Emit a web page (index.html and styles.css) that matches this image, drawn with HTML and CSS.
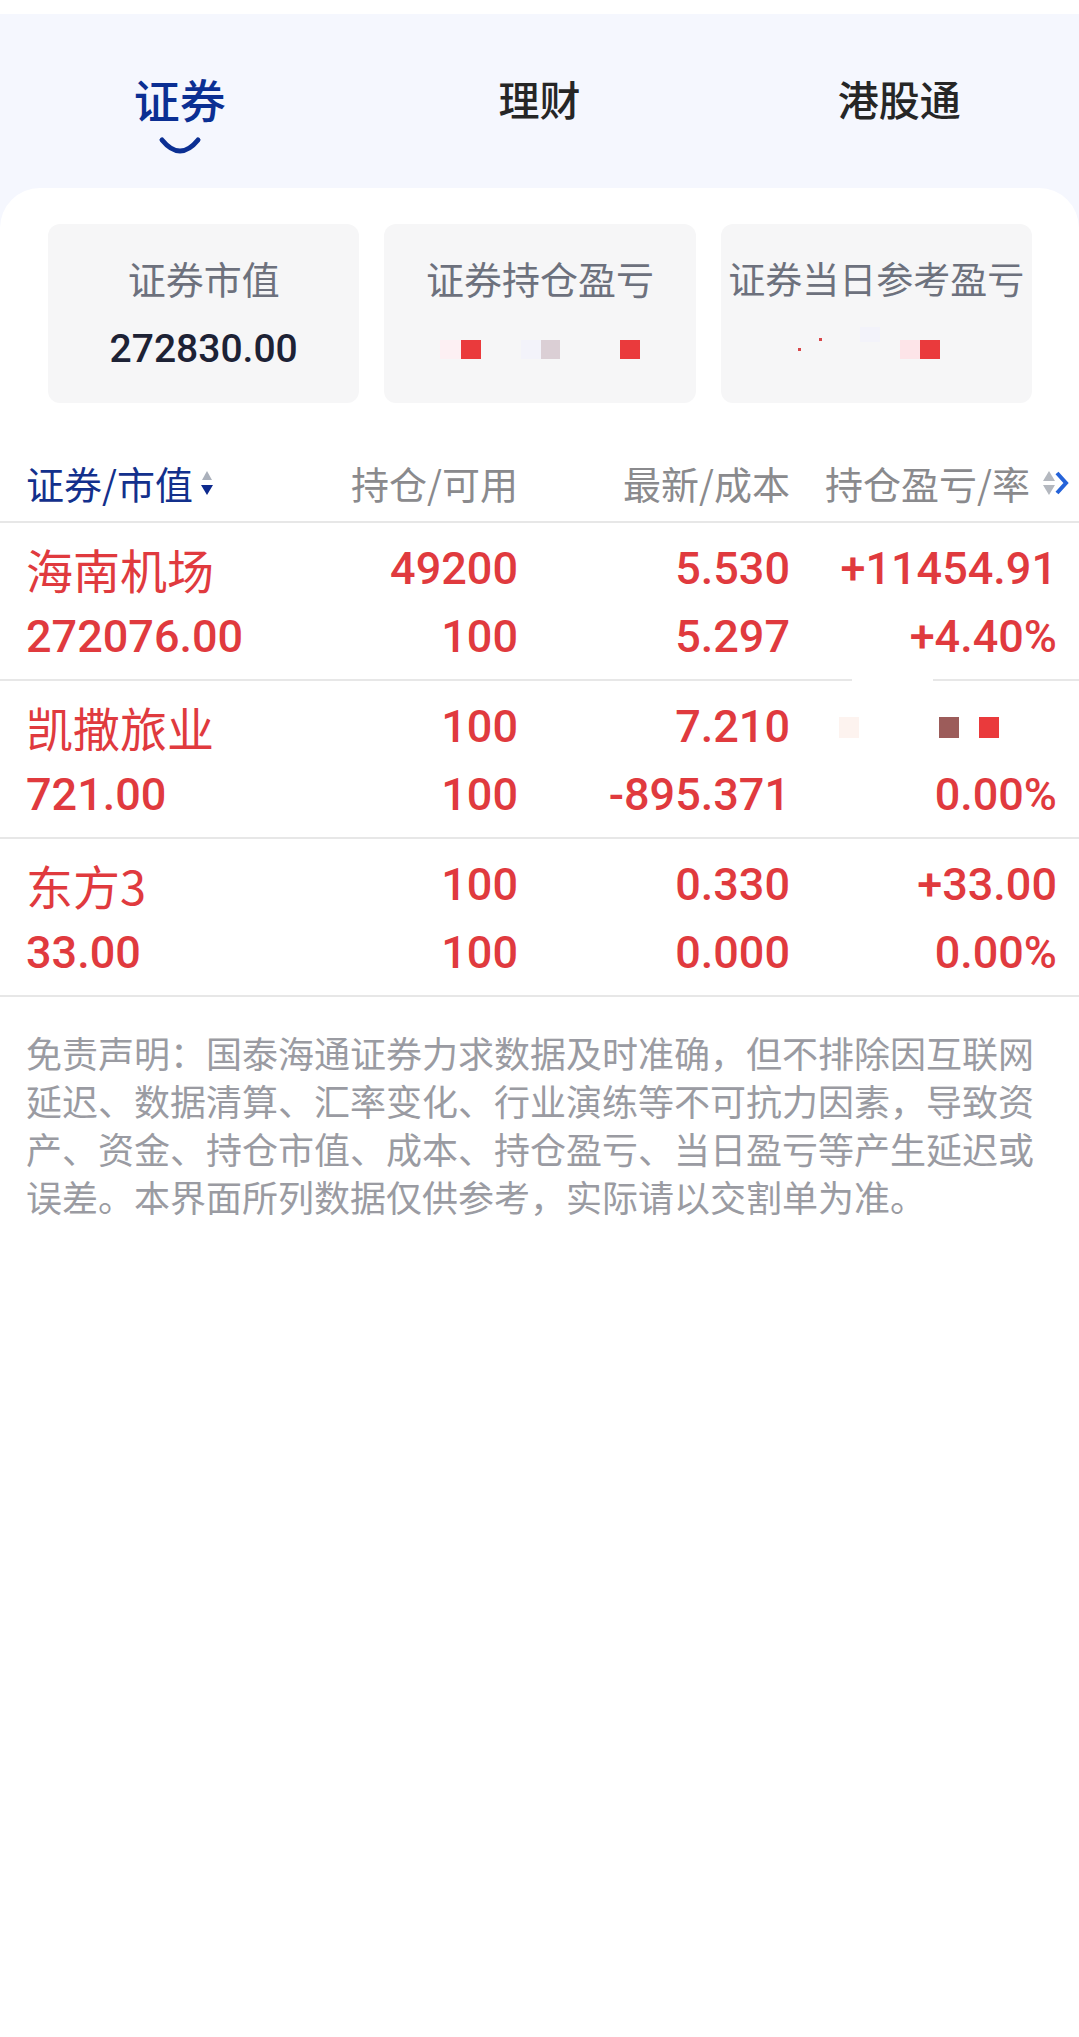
FILE: index.html
```html
<!DOCTYPE html>
<html>
<head>
  <meta charset="UTF-8">
  <title>持仓</title>
  <link rel="stylesheet" href="styles.css">
</head>
<body>

  <div class="status"></div>

  <div class="screen">
    <nav class="tabs">
      <div class="tab active">
        <span class="tab-label">证券</span>
        <svg class="smile" width="44" height="20" viewBox="0 0 44 20">
          <path d="M4 4 Q22 26 40 4" fill="none" stroke="#0b2f93" stroke-width="5" stroke-linecap="round"/>
        </svg>
      </div>
      <div class="tab"><span class="tab-label">理财</span></div>
      <div class="tab"><span class="tab-label">港股通</span></div>
    </nav>

    <main class="card">
      <section class="stats">
        <div class="stat">
          <div class="stat-label">证券市值</div>
          <div class="stat-value">272830.00</div>
        </div>
        <div class="stat">
          <div class="stat-label">证券持仓盈亏</div>
          <div class="stat-value masked">
            <span class="sq sq-pink"></span><span class="sq sq-red"></span>
            <span class="sq sq-light ml-40"></span><span class="sq sq-mauve"></span>
            <span class="sq sq-red ml-60"></span>
          </div>
        </div>
        <div class="stat">
          <div class="stat-label tight">证券当日参考盈亏</div>
          <div class="stat-value masked left">
            <span class="speck"></span><span class="speck up ml-18"></span>
            <span class="sq sq-light raised ml-38"></span>
            <span class="sq sq-blush ml-20"></span><span class="sq sq-red"></span>
          </div>
        </div>
      </section>

      <div class="thead">
        <div class="th th-main">证券/市值
          <svg class="sort" width="12" height="26" viewBox="0 0 12 26">
            <polygon points="1,10 6,1 11,10" fill="#aab0bb"/>
            <polygon points="0,15 12,15 6,25" fill="#0e2a8e"/>
          </svg>
        </div>
        <div class="th">持仓/可用</div>
        <div class="th">最新/成本</div>
        <div class="th th-last">持仓盈亏/率
          <svg class="more" width="27" height="26" viewBox="0 0 27 26">
            <polygon points="0,11 6,1 12,11" fill="#b4b8bf"/>
            <polygon points="0,15 12,15 6,25" fill="#b4b8bf"/>
            <polyline points="14,3 23,13 14,23" fill="none" stroke="#2563d9" stroke-width="4"/>
          </svg>
        </div>
      </div>

      <div class="row gap-mask">
        <div class="cell name">海南机场</div>
        <div class="cell num">49200</div>
        <div class="cell num">5.530</div>
        <div class="cell num">+11454.91</div>
        <div class="cell num first">272076.00</div>
        <div class="cell num">100</div>
        <div class="cell num">5.297</div>
        <div class="cell num">+4.40%</div>
      </div>

      <div class="row">
        <div class="cell name">凯撒旅业</div>
        <div class="cell num">100</div>
        <div class="cell num">7.210</div>
        <div class="cell masked-cell">
          <span class="sq sq-peach"></span><span class="sq sq-brown ml-80"></span><span class="sq sq-red ml-20"></span>
        </div>
        <div class="cell num first">721.00</div>
        <div class="cell num">100</div>
        <div class="cell num">-895.371</div>
        <div class="cell num">0.00%</div>
      </div>

      <div class="row">
        <div class="cell name">东方3</div>
        <div class="cell num">100</div>
        <div class="cell num">0.330</div>
        <div class="cell num">+33.00</div>
        <div class="cell num first">33.00</div>
        <div class="cell num">100</div>
        <div class="cell num">0.000</div>
        <div class="cell num">0.00%</div>
      </div>

      <p class="disclaimer">免责声明：国泰海通证券力求数据及时准确，但不排除因互联网延迟、数据清算、汇率变化、行业演练等不可抗力因素，导致资产、资金、持仓市值、成本、持仓盈亏、当日盈亏等产生延迟或误差。本界面所列数据仅供参考，实际请以交割单为准。</p>
    </main>
  </div>

</body>
</html>
```

FILE: styles.css
```css
body {
  margin: 0;
  background-color: #fff;
  font-family: "Noto Sans CJK SC", "Noto Sans", sans-serif;
}

.status {
  height: 14px;
  background-color: #fff;
}

.screen {
  background-color: #f5f7fe;
}

/* tabs */
.tabs {
  display: grid;
  grid-template-columns: repeat(3, 1fr);
  height: 174px;
}

.tab {
  display: flex;
  flex-direction: column;
  align-items: center;
  padding-top: 59px;
}

.tab-label {
  font-size: 41px;
  line-height: 50px;
  font-weight: 500;
  color: #262626;
}

.tab.active .tab-label {
  font-size: 46px;
  color: #0b2f93;
}

.smile {
  display: block;
  margin-top: 13px;
}

/* card */
.card {
  background-color: #fff;
  border-radius: 40px 40px 0 0;
  min-height: 1849px;
  padding-top: 36px;
  box-sizing: border-box;
}

.stats {
  display: grid;
  grid-template-columns: repeat(3, 1fr);
  gap: 25px;
  padding: 0 47px 0 48px;
}

.stat {
  height: 179px;
  box-sizing: border-box;
  padding-top: 31px;
  background-color: #f6f6f7;
  border-radius: 12px;
  text-align: center;
}

.stat-label {
  font-size: 38px;
  line-height: 46px;
  color: #6d717d;
  white-space: nowrap;
}

.stat-label.tight {
  font-size: 37px;
}

.stat-value {
  margin-top: 23px;
  height: 50px;
  font-family: Roboto, "Noto Sans", sans-serif;
  font-size: 39px;
  line-height: 50px;
  font-weight: 500;
  color: #1d2235;
}

.masked {
  display: flex;
  align-items: center;
  justify-content: center;
}

.masked.left {
  justify-content: flex-start;
  padding-left: 77px;
}

.sq {
  display: block;
  width: 20px;
  height: 19px;
}

.sq-pink { background-color: #fdf0f3; width: 21px; }
.sq-red { background-color: #ea3a3c; }
.sq-light { background-color: #f3f3fa; }
.sq-mauve { background-color: #dbcfd5; width: 19px; }
.sq-blush { background-color: #fde4e8; }
.sq-peach { background-color: #fdf3ef; height: 21px; }
.sq-brown { background-color: #9c5c5a; height: 21px; }

.masked-cell .sq-red { height: 21px; }

.raised { margin-top: -30px; height: 15px; }

.speck {
  display: block;
  width: 3px;
  height: 3px;
  background-color: #d8474a;
}

.speck.up { margin-top: -20px; }

.ml-18 { margin-left: 18px; }
.ml-20 { margin-left: 20px; }
.ml-38 { margin-left: 38px; }
.ml-40 { margin-left: 40px; }
.ml-60 { margin-left: 60px; }
.ml-80 { margin-left: 80px; }

/* table */
.thead,
.row {
  display: grid;
  grid-template-columns: 274px 218px 272px 1fr;
  padding-left: 26px;
  padding-right: 22px;
  border-bottom: 2px solid #e7e7e7;
}

.thead {
  padding-top: 55px;
  padding-bottom: 13px;
}

.th {
  display: flex;
  align-items: center;
  justify-content: flex-end;
  font-size: 38px;
  line-height: 50px;
  color: #8a8a8d;
  white-space: nowrap;
}

.th-main {
  justify-content: flex-start;
  color: #13308c;
}

.sort {
  margin-left: 8px;
}

.th-last {
  margin-right: -13px;
}

.more {
  margin-left: 13px;
}

.row {
  position: relative;
  padding-top: 12px;
  padding-bottom: 8px;
  color: #e03a3e;
}

.cell {
  line-height: 68px;
  height: 68px;
  text-align: right;
  white-space: nowrap;
}

.name {
  text-align: left;
  font-size: 47px;
}

.num {
  font-family: Roboto, "Noto Sans", sans-serif;
  font-size: 45px;
  font-weight: 500;
}

.num.first {
  text-align: left;
}

.masked-cell {
  display: flex;
  align-items: center;
  justify-content: flex-end;
  padding-right: 58px;
}

.gap-mask::after {
  content: "";
  position: absolute;
  left: 852px;
  bottom: -2px;
  width: 81px;
  height: 2px;
  background-color: #fff;
}

.disclaimer {
  margin: 0;
  padding: 31px 26px 0;
  font-size: 36px;
  line-height: 48px;
  color: #9a9ba2;
}
```
